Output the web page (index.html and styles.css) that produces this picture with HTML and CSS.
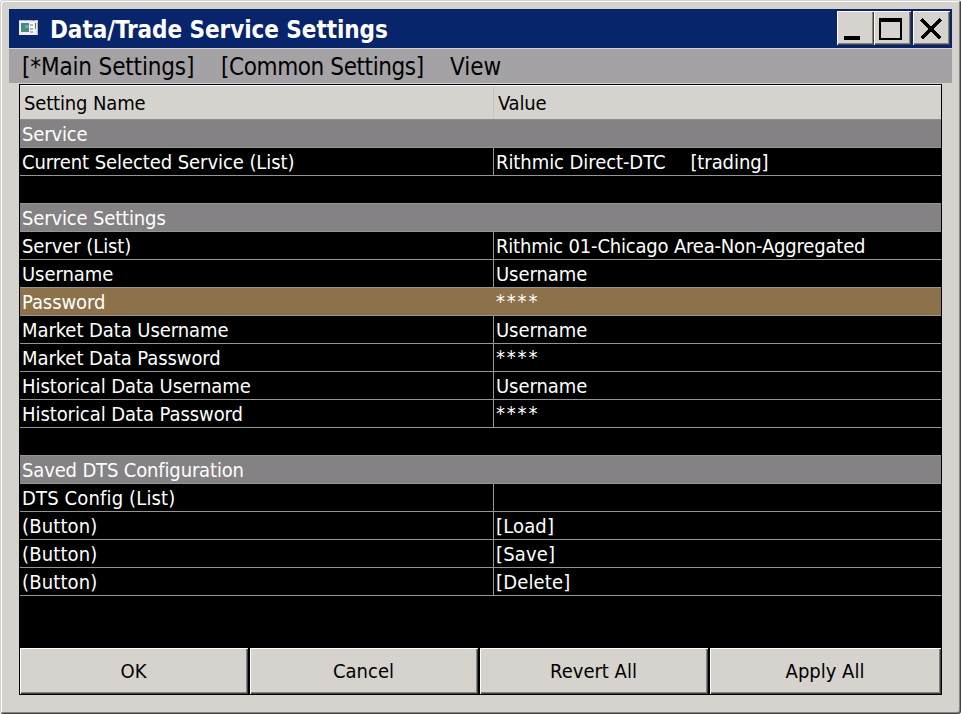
FILE: index.html
```html
<!DOCTYPE html>
<html lang="en">
<head>
<meta charset="utf-8">
<title>Data/Trade Service Settings</title>
<link rel="stylesheet" href="styles.css">
</head>
<body>
<main class="window">
  <header class="titlebar">
    <svg class="app-icon" viewBox="0 0 19 15" shape-rendering="crispEdges">
      <path fill="#eeeef0" d="M0 0h19v15H0z"/><path fill="#b5b5ba" d="M0 0h19v1H0zM18 2h1v13h-1z"/><path fill="#555560" d="M14 0h1v1h-1z"/>
      <path fill="#4a829e" d="M2 3h8v9H2z"/><path fill="#489568" d="M2 8h3v4H2zM5 10h3v2H5z"/><path fill="#6fa8b0" d="M6 5h4v3H6z"/>
      <path fill="#fafafa" d="M10 3h5v11h-5z"/><path fill="#b4b4ba" d="M11 4h3v2h-3zM11 8h3v2h-3zM11 11h3v2h-3z"/><path fill="#47758f" d="M16 3h1v3h-1z"/><path fill="#489568" d="M16 6h1v3h-1z"/>
    </svg>
    <h1 class="title">Data/Trade Service Settings</h1>
    <div class="controls">
      <button class="control" aria-label="Minimize"><svg viewBox="0 0 32 30" shape-rendering="crispEdges"><path d="M6 24h16v4H6z"/></svg></button>
      <button class="control" aria-label="Maximize"><svg viewBox="0 0 32 30" shape-rendering="crispEdges"><path fill-rule="evenodd" d="M4 6h23v22H4zM6 10v16h19V10z"/></svg></button>
      <button class="control close" aria-label="Close"><svg viewBox="0 0 32 30" shape-rendering="crispEdges"><path fill="none" stroke="#000" stroke-width="3.4" d="M7.500 7.500l19 19M26.500 7.500l-19 19"/></svg></button>
    </div>
  </header>
  <nav class="menubar"><span class="menu-main">[*Main Settings]</span><span class="menu-common">[Common Settings]</span><span class="menu-view">View</span></nav>
  <section class="panel">
    <div class="row head"><span>Setting Name</span><span>Value</span></div>
    <div class="row section"><span>Service</span></div>
    <div class="row"><span>Current Selected Service (List)</span><span class="trading"><span>Rithmic Direct-DTC</span><span>[trading]</span></span></div>
    <div class="row blank"></div>
    <div class="row section"><span>Service Settings</span></div>
    <div class="row"><span>Server (List)</span><span class="server">Rithmic 01-Chicago Area-Non-Aggregated</span></div>
    <div class="row"><span>Username</span><span>Username</span></div>
    <div class="row selected"><span>Password</span><span class="masked">****</span></div>
    <div class="row"><span>Market Data Username</span><span>Username</span></div>
    <div class="row"><span>Market Data Password</span><span class="masked">****</span></div>
    <div class="row"><span>Historical Data Username</span><span>Username</span></div>
    <div class="row"><span>Historical Data Password</span><span class="masked">****</span></div>
    <div class="row blank"></div>
    <div class="row section"><span>Saved DTS Configuration</span></div>
    <div class="row plain"><span>DTS Config (List)</span><span></span></div>
    <div class="row plain"><span>(Button)</span><span>[Load]</span></div>
    <div class="row plain"><span>(Button)</span><span>[Save]</span></div>
    <div class="row plain"><span>(Button)</span><span>[Delete]</span></div>
    <footer class="actions"><button>OK</button><button>Cancel</button><button>Revert All</button><button>Apply All</button></footer>
  </section>
</main>
</body>
</html>
```
FILE: styles.css
```css
* { box-sizing: border-box; }
body { margin: 0; background: #fff; overflow: hidden; }
.window {
  width: 961px; height: 714px; padding: 8px;
  background: #d6d3ce; color: #000;
  border: 1px solid #d6d3ce; border-right-color: #424142; border-bottom-color: #424142;
  box-shadow: inset 1px 1px #fff, inset -1px -1px #848284;
  font: 20px/29px "DejaVu Sans Condensed", "DejaVu Sans", sans-serif;
  font-stretch: condensed;
  border-radius: 3px;
}
.titlebar { height: 39px; background: #08246b; display: flex; align-items: flex-start; }
.app-icon { width: 19px; height: 15px; margin: 11px 12px 0 10px; }
.title { margin: 0; flex: 1; font-size: 24px; line-height: 39px; color: #fff; white-space: nowrap; letter-spacing: -.06px; padding-top: 2px; }
.controls { display: flex; padding: 2px 2px 0 0; }
.control {
  width: 37px; height: 34px; padding: 0; border: 0; background: #d6d3ce;
  box-shadow: inset 1px 1px #fff, inset -1px -1px #424142, inset -2px -2px #848284;
}
.control svg { display: block; width: 32px; height: 30px; margin: -2px 0 0 1px; }
.close { margin-left: 2px; }
.menubar { height: 34px; margin-top: 1px; background: #a5a2a5; display: flex; font-size: 24px; line-height: 37px; white-space: nowrap; padding-left: 13px; }
.menu-main { width: 199px; letter-spacing: -.15px; }
.menu-common { width: 229px; letter-spacing: -.4px; }
.panel { width: 923px; height: 611px; margin: 1px 0 0 10px; border: 1px solid #000; background: #000; display: flex; flex-direction: column; }
.row { height: 28px; flex: none; display: grid; grid-template-columns: 473px 1fr; grid-template-rows: 100%; border-bottom: 1px solid #949694; color: #fff; white-space: nowrap; letter-spacing: -.07px; }
.row > span { padding-left: 2px; }
.row > span + span { border-left: 1px solid #949694; }
.head { height: 35px; background: #d6d3ce; color: #000; border-top: 1px solid #fff; border-bottom-color: #8c8e8c; line-height: 34px; letter-spacing: -.15px; }
.head > span { padding-left: 4px; }
.head > span + span { border-left-color: #c6c3c6; }
.section { background: #848284; letter-spacing: -.15px; }
.selected { background: #8c714a; }
.selected > span + span { border-left-color: transparent; }
.plain { letter-spacing: .15px; }
.server { letter-spacing: -.19px; }
.masked { letter-spacing: 1.8px; line-height: 26px; }
.trading { display: flex; gap: 25px; }
.actions { margin-top: auto; height: 46px; display: grid; grid-template-columns: 228px 228px 228px 1fr; gap: 2px; }
.actions button { font: inherit; color: #000; border: 0; padding: 0 1px 0 0; background: #d6d3ce; box-shadow: inset 1px 1px #fff, inset -1px -1px #424142, inset -2px -2px #848284; }
```
